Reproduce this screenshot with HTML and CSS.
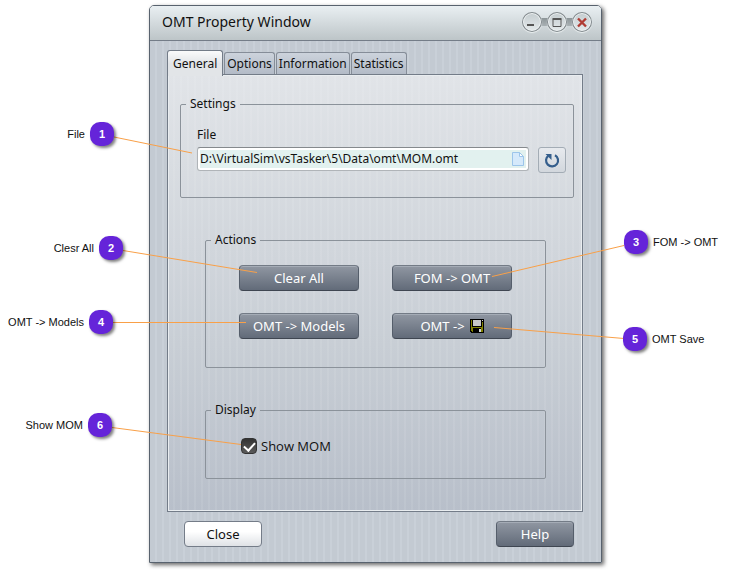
FILE: index.html
```
<!DOCTYPE html>
<html lang="en">
<head>
    <meta charset="UTF-8">
    <meta name="viewport" content="width=device-width, initial-scale=1.0">
    <title>OMT Property Window</title>
    <link rel="stylesheet" href="styles.css">
</head>
<body>
    <div class="figure">
        <div class="window">
            <div class="title-bar">
                <h1>OMT Property Window</h1>
                <div class="window-controls">
                    <button type="button" aria-label="Minimize">
                        <svg width="20" height="20" viewBox="0 0 20 20"><path d="M5 13h7" stroke="#555" stroke-width="2"/></svg>
                    </button>
                    <button type="button" aria-label="Maximize">
                        <svg width="20" height="20" viewBox="0 0 20 20"><path d="M6 7.5v7h8v-7" fill="none" stroke="#555"/><path d="M5.500 7h9" stroke="#555" stroke-width="2"/></svg>
                    </button>
                    <button type="button" aria-label="Close window">
                        <svg width="20" height="20" viewBox="0 0 20 20"><path d="M6 6.500l8 8M14 6.500l-8 8" stroke="#b03c34" stroke-width="2.400"/></svg>
                    </button>
                </div>
            </div>

            <div class="window-body">
                <div class="tabs" role="tablist">
                    <button type="button" class="tab active" role="tab" aria-selected="true">General</button>
                    <button type="button" class="tab" role="tab">Options</button>
                    <button type="button" class="tab" role="tab">Information</button>
                    <button type="button" class="tab" role="tab">Statistics</button>
                </div>

                <div class="panel" role="tabpanel">
                    <fieldset class="settings">
                        <legend>Settings</legend>
                        <label for="file">File</label>
                        <div class="file-row">
                            <div class="file-box">
                                <input type="text" id="file" value="D:\VirtualSim\vsTasker\5\Data\omt\MOM.omt">
                                <svg width="12" height="16" viewBox="0 0 12 16"><path d="M.5 1.500h7l4 4v9H.5z" fill="#d5e9fb" stroke="#9cc5ea"/><path d="M7.500 1.500v4h4z" fill="#fff" stroke="#9cc5ea"/></svg>
                            </div>
                            <button type="button" class="reload" aria-label="Reload">
                                <svg width="16" height="16" viewBox="0 0 16 16"><path d="M11 3.200A6 6 0 1 1 4.500 3.600" fill="none" stroke="#355e8c" stroke-width="2.200"/><path d="M1.500 2h6v6z" fill="#355e8c"/></svg>
                            </button>
                        </div>
                    </fieldset>

                    <fieldset class="actions">
                        <legend>Actions</legend>
                        <div class="action-grid">
                            <button type="button" class="btn dark">Clear All</button>
                            <button type="button" class="btn dark">FOM -&gt; OMT</button>
                            <button type="button" class="btn dark">OMT -&gt; Models</button>
                            <button type="button" class="btn dark">OMT -&gt;
                                <svg width="14" height="14" viewBox="0 0 14 14" shape-rendering="crispEdges"><path d="M0 0h14v14H1l-1-1z" fill="#000"/><path d="M1 1h1v7h10V3h1v10H2v-1H1z" fill="#808000"/><path d="M3 9h8v4H3z" fill="#000"/><path d="M3 1h8v6H3z" fill="#c8c8c8"/><path d="M12 1h1v1h-1zM9 10h2v3H9z" fill="#d8d8d8"/></svg>
                            </button>
                        </div>
                    </fieldset>

                    <fieldset class="display">
                        <legend>Display</legend>
                        <div class="check-row">
                            <input type="checkbox" id="show-mom" checked>
                            <label for="show-mom">Show MOM</label>
                        </div>
                    </fieldset>
                </div>

                <div class="footer">
                    <button type="button" class="btn light">Close</button>
                    <button type="button" class="btn dark">Help</button>
                </div>
            </div>
        </div>

        <!-- Leader lines -->
        <svg class="leaders" width="729" height="572" viewBox="0 0 729 572">
            <path d="M114 137L192 153M123 250.500L257 272.500M113 322.500H246M112 427.500L241 444.500M624 245.500L492 276.500M624 338.500L494 327.500"/>
        </svg>

        <!-- Numbered callouts -->
        <div class="callout c1"><span>File</span><b>1</b></div>
        <div class="callout c2"><span>Clesr All</span><b>2</b></div>
        <div class="callout c3"><b>3</b><span>FOM -&gt; OMT</span></div>
        <div class="callout c4"><span>OMT -&gt; Models</span><b>4</b></div>
        <div class="callout c5"><b>5</b><span>OMT Save</span></div>
        <div class="callout c6"><span>Show MOM</span><b>6</b></div>
    </div>
</body>
</html>
```
FILE: styles.css
```
* {
    box-sizing: border-box;
}

body {
    margin: 0;
    background: #fff;
    color: #111;
    font-family: "Noto Sans", "Open Sans", sans-serif;
    font-size: 12px;
    line-height: 18px;
}

button, input {
    font: inherit;
    color: inherit;
    margin: 0;
}

svg {
    display: block;
    flex: none;
}

.figure {
    position: relative;
    max-width: 729px;
    padding: 5px 127px 9px 149px;
}

/* Window */
.window {
    border: 1px solid #58626e;
    border-radius: 5px 5px 0 0;
    overflow: hidden;
    box-shadow: 2px 2px 4px rgba(0, 0, 0, 0.6);
}

.title-bar {
    display: flex;
    justify-content: space-between;
    align-items: center;
    height: 35px;
    padding: 0 9px 2px 12px;
    border-bottom: 1px solid #747d88;
    background: linear-gradient(#e9eff2, #bdc5c8);
}

h1 {
    margin: 0;
    font-size: 14px;
    font-weight: normal;
    line-height: 20px;
}

.window-controls {
    display: flex;
    gap: 5px;
    background: linear-gradient(#8d9598, #a9b1b4) center / 50px 8px no-repeat;
}

.window-controls button {
    width: 20px;
    height: 20px;
    padding: 0;
    border: 0;
    border-radius: 50%;
    background: linear-gradient(#c3cbce, #e6ebed);
    box-shadow: inset 0 0 0 1px #80888c, inset 0 0 0 2px #eef2f3, 0 1px 1px #eef2f3;
}

.window-body {
    padding: 9px 18px 0 17px;
    background: repeating-linear-gradient(90deg, #c3cad2 0 5px, #c9d0d8 5px 7px);
}

/* Tabs */
.tabs {
    display: flex;
    align-items: flex-end;
    gap: 1px;
    height: 24px;
}

.tab {
    height: 22px;
    padding: 0 2px;
    border: 1px solid #858d98;
    border-bottom: 0;
    border-radius: 3px 3px 0 0;
    background: linear-gradient(#ccd3dc, #b3bbc7);
    line-height: 20px;
}

.tab.active {
    position: relative;
    height: 26px;
    margin-bottom: -2px;
    padding: 0 5px;
    border-color: #737c88;
    background: linear-gradient(#fafbfb, #e2e5e8 50%);
}

.panel {
    padding: 20px 8px 32px 12px;
    border: 1px solid #737c88;
    box-shadow: inset 0 0 0 1px #e9edf0;
    background:
        repeating-linear-gradient(90deg, transparent 0 5px, rgba(255, 255, 255, 0.08) 5px 7px),
        linear-gradient(#e1e4e8, #c8ced5 62%, #b8bfca);
}

/* Groups */
fieldset {
    min-width: 0;
    margin: 0 0 33px;
    padding: 0 5px;
    border: 1px solid #8b929a;
    border-radius: 2px;
}

legend {
    padding: 0 4px;
}

.settings {
    padding-bottom: 24px;
}

.settings label {
    display: block;
    margin: 13px 11px 3px;
}

.file-row {
    display: flex;
    align-items: flex-start;
    gap: 9px;
    padding: 0 2px 0 11px;
}

.file-box {
    display: flex;
    flex: 1;
    align-items: center;
    height: 24px;
    padding-right: 4px;
    border: 1px solid #b0b4b8;
    border-top-color: #85898d;
    border-radius: 3px;
    background: #e2f1ef;
    box-shadow: inset 0 0 0 2px #fff;
}

.file-box input {
    flex: 1;
    min-width: 0;
    padding: 0 2px;
    border: 0;
    background: none;
}

.reload {
    display: flex;
    align-items: center;
    justify-content: center;
    width: 28px;
    height: 26px;
    padding: 0;
    border: 1px solid #a3acb5;
    border-radius: 3px;
    background: linear-gradient(#e7eaee, #d2d7dd);
}

.actions, .display {
    margin-left: 25px;
    margin-right: 28px;
}

.action-grid {
    display: grid;
    grid-template-columns: 1fr 1fr;
    gap: 22px 33px;
    padding: 16px 28px 28px;
}

.display {
    margin-bottom: 0;
}

.check-row {
    display: flex;
    align-items: center;
    gap: 4px;
    padding: 18px 30px 23px;
    font-family: "Open Sans", sans-serif;
    font-size: 13px;
}

.check-row input {
    appearance: none;
    width: 16px;
    height: 16px;
    border: 1px solid #333;
    border-radius: 4px;
    background: linear-gradient(#333, #5a5a5a);
}

.check-row input:checked::before {
    content: "";
    display: block;
    width: 5px;
    height: 9px;
    margin: 1px 4px;
    border: solid #fff;
    border-width: 0 2px 2px 0;
    transform: rotate(42deg);
}

/* Buttons */
.btn {
    display: flex;
    align-items: center;
    justify-content: center;
    gap: 5px;
    height: 26px;
    padding: 0 8px;
    border-radius: 4px;
    font-size: 13px;
}

.btn.dark {
    border: 1px solid #555e6b;
    border-top-color: #737b86;
    border-bottom-color: #3f4651;
    background: linear-gradient(#9097a2, #626b79);
    box-shadow: inset 0 1px 0 #a5acb6;
    color: #fff;
}

.btn.light {
    border: 1px solid #747c88;
    background: linear-gradient(#fff 40%, #dfe2e6);
}

.footer {
    display: flex;
    justify-content: space-between;
    padding: 9px 9px 15px 17px;
}

.footer .btn {
    width: 78px;
}

/* Callouts lie over the window */
.leaders {
    position: absolute;
    top: 0;
    left: 0;
    fill: none;
    stroke: #f9a048;
    pointer-events: none;
}

.callout {
    position: absolute;
    display: flex;
    align-items: center;
    gap: 5px;
    font-family: "Liberation Sans", Arial, sans-serif;
    font-size: 11px;
    white-space: nowrap;
}

.callout b {
    width: 24px;
    height: 24px;
    border-radius: 10px;
    background: #6524d9;
    box-shadow: 2px 2px 3px rgba(0, 0, 0, 0.5);
    color: #fff;
    line-height: 24px;
    text-align: center;
}

.c1 { top: 122px; right: 615px; }
.c2 { top: 236px; right: 606px; }
.c3 { top: 230px; left: 624px; }
.c4 { top: 310px; right: 616px; }
.c5 { top: 327px; left: 623px; }
.c6 { top: 413px; right: 617px; }
```
